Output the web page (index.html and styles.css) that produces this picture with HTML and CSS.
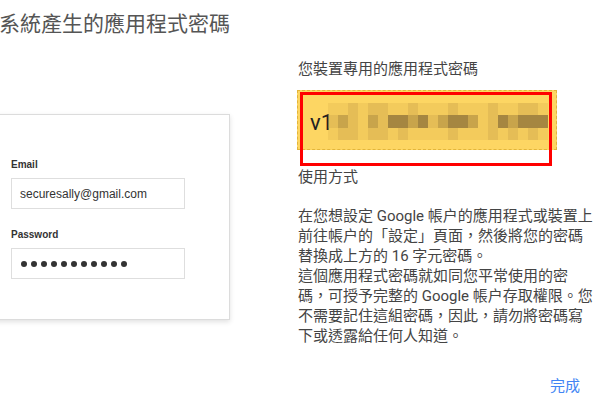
FILE: index.html
```html
<!DOCTYPE html>
<html lang="zh-Hant">
<head>
<meta charset="utf-8">
<title>系統產生的應用程式密碼</title>
<link rel="stylesheet" href="styles.css">
</head>
<body>
<div class="page">
  <h1 class="title">系統產生的應用程式密碼</h1>
  <div class="main">
    <div class="left">
      <div class="card">
        <div class="field">
          <div class="label">Email</div>
          <div class="input">securesally@gmail.com</div>
        </div>
        <div class="field">
          <div class="label">Password</div>
          <div class="input dots">
            <span class="dot"></span><span class="dot"></span><span class="dot"></span><span class="dot"></span><span class="dot"></span><span class="dot"></span><span class="dot"></span><span class="dot"></span><span class="dot"></span><span class="dot"></span><span class="dot"></span>
          </div>
        </div>
      </div>
    </div>
    <div class="right">
      <div class="sub">您裝置專用的應用程式密碼</div>
      <div class="pw-wrap">
        <div class="pw-box">
          <span class="pw-text">v1</span>
          <div class="pixels">
            <span class="a"></span><span class="a"></span><span class="b"></span><span class="a"></span><span class="b"></span><span class="b"></span><span class="a"></span><span class="a"></span><span class="b"></span><span class="a"></span><span class="a"></span><span class="a"></span><span class="b"></span><span class="a"></span><span class="a"></span><span class="a"></span><span class="b"></span><span class="a"></span><span class="a"></span><span class="b"></span><span class="b"></span><span class="a"></span>
            <span class="b"></span><span class="c"></span><span class="b"></span><span class="a"></span><span class="c"></span><span class="b"></span><span class="d"></span><span class="d"></span><span class="c"></span><span class="d"></span><span class="b"></span><span class="c"></span><span class="d"></span><span class="d"></span><span class="c"></span><span class="a"></span><span class="b"></span><span class="d"></span><span class="c"></span><span class="d"></span><span class="d"></span><span class="d"></span>
            <span class="a"></span><span class="b"></span><span class="b"></span><span class="a"></span><span class="b"></span><span class="b"></span><span class="a"></span><span class="b"></span><span class="a"></span><span class="a"></span><span class="a"></span><span class="a"></span><span class="b"></span><span class="a"></span><span class="a"></span><span class="a"></span><span class="b"></span><span class="a"></span><span class="b"></span><span class="a"></span><span class="b"></span><span class="a"></span>
          </div>
        </div>
        <div class="highlight"></div>
      </div>
      <div class="how">使用方式</div>
      <p class="desc">在您想設定 Google 帳户的應用程式或裝置上<br>前往帳户的「設定」頁面，然後將您的密碼<br>替換成上方的 16 字元密碼。<br>這個應用程式密碼就如同您平常使用的密<br>碼，可授予完整的 Google 帳户存取權限。您<br>不需要記住這組密碼，因此，請勿將密碼寫<br>下或透露給任何人知道。</p>
    </div>
  </div>
  <div class="actions">
    <span class="done">完成</span>
  </div>
</div>
</body>
</html>
```

FILE: styles.css
```css
html, body {
  margin: 0;
  padding: 0;
  background: #ffffff;
}

body {
  width: 616px;
  height: 405px;
  overflow: hidden;
  font-family: Roboto, "Noto Sans CJK TC", sans-serif;
  color: #444444;
}

.page {
  display: flex;
  flex-direction: column;
}

.title {
  margin: 10px 0 0 -1px;
  font-size: 21px;
  line-height: 28px;
  font-weight: 400;
  color: #555555;
  white-space: nowrap;
}

.main {
  display: flex;
  align-items: flex-start;
  gap: 66px;
  margin-top: 21px;
}

.left {
  width: 232px;
  flex: none;
}

.card {
  margin-top: 55px;
  margin-left: -20px;
  width: 250px;
  height: 206px;
  box-sizing: border-box;
  border: 1px solid #dcdcdc;
  background: #ffffff;
  box-shadow: 0 2px 5px rgba(0, 0, 0, 0.12);
  padding: 44px 0 0 30px;
  display: flex;
  flex-direction: column;
  gap: 20px;
  font-family: "Liberation Sans", Arial, sans-serif;
}

.label {
  font-size: 10px;
  line-height: 12px;
  font-weight: 700;
  color: #333333;
  margin-bottom: 7px;
}

.input {
  width: 174px;
  height: 31px;
  box-sizing: border-box;
  border: 1px solid #dedede;
  padding: 0 0 0 8px;
  font-size: 12px;
  color: #333333;
  display: flex;
  align-items: center;
}

.dots {
  gap: 4px;
  padding-left: 9px;
}

.dot {
  width: 6px;
  height: 6px;
  border-radius: 50%;
  background: #333333;
}

.right {
  display: flex;
  flex-direction: column;
  width: 300px;
}

.sub {
  font-size: 15px;
  line-height: 20px;
  color: #444444;
}

.pw-wrap {
  position: relative;
  margin-top: 11px;
  margin-left: -1px;
}

.pw-box {
  position: relative;
  width: 260px;
  height: 60px;
  box-sizing: border-box;
  background: #fdd663;
  border: 1px dashed #e2b53a;
  display: flex;
  align-items: center;
  padding-left: 12px;
}

.pw-text {
  font-size: 22px;
  line-height: 24px;
  color: #222222;
  margin-top: 5px;
}

.pixels {
  position: absolute;
  left: 30px;
  top: 12px;
  display: grid;
  grid-template-columns: repeat(22, 10px);
  grid-template-rows: 12px 13px 12px;
}

.pixels .a { background: rgba(215, 170, 70, 0.25); }
.pixels .b { background: rgba(200, 160, 70, 0.45); }
.pixels .c { background: rgba(165, 130, 60, 0.6); }
.pixels .d { background: rgba(140, 112, 55, 0.78); }

.highlight {
  position: absolute;
  left: 3px;
  top: 2px;
  width: 252px;
  height: 74px;
  box-sizing: border-box;
  border: 3px solid #ff0000;
}

.how {
  margin-top: 17px;
  font-size: 15px;
  line-height: 20px;
  color: #444444;
}

.desc {
  margin: 19px 0 0 0;
  font-size: 15px;
  line-height: 20px;
  color: #444444;
  white-space: nowrap;
}

.actions {
  display: flex;
  justify-content: flex-end;
  padding-right: 36px;
  margin-top: 30px;
}

.done {
  font-size: 15px;
  line-height: 20px;
  color: #4285f4;
}
```
